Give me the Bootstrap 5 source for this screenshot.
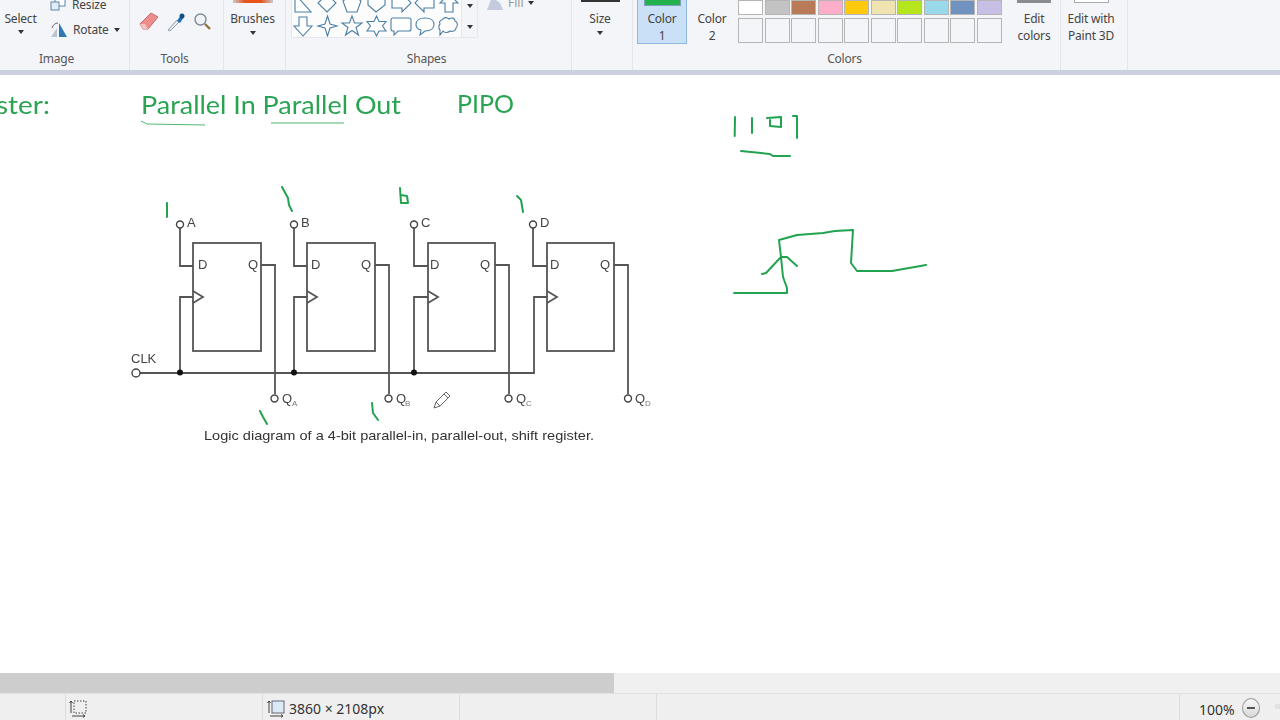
<!DOCTYPE html>
<html lang="en">
<head>
<meta charset="UTF-8">
<title>Paint</title>
<link href="https://cdn.jsdelivr.net/npm/bootstrap@5.3.3/dist/css/bootstrap.min.css" rel="stylesheet">
<style>
    html, body { height: 100%; overflow: hidden; }
    body { background: #fff; font-family: "Noto Sans", "Open Sans", sans-serif; color: #444; }
    .paint-app { width: 1280px; height: 720px; }

    /* ribbon */
    .ribbon { height: 75px; background: #f4f5f8; border-bottom: 5px solid #ccd1e1; overflow: hidden; flex: none; }
    .rb-group { height: 70px; border-right: 1px solid #e4e6ec; flex: none; }
    .rb-body { height: 50px; overflow: hidden; }
    .rb-label { height: 20px; line-height: 17px; font-size: 12px; letter-spacing: -.2px; color: #555; text-align: center; padding-right: 4px; }
    .w-image { width: 130px; } .w-tools { width: 94px; } .w-brush { width: 62px; } .w-shapes { width: 286px; }
    .w-size { width: 61px; } .w-colors { width: 428px; } .w-3d { width: 67px; }
    .w-image .rb-label { padding-right: 16px; }
    .rb-txt { font-size: 12px; line-height: 17px; letter-spacing: -.2px; color: #444; text-align: center; }
    .rb-caret { width: 0; height: 0; border: 3px solid transparent; border-top: 4px solid #333; border-bottom: 0; display: inline-block; }
    .rb-tall { padding-top: 10px; }
    .rb-tall .rb-caret { margin-top: 3px; }
    .sel-col { width: 41px; }
    .img-col { padding-left: 9px; width: 88px; }
    .img-row { height: 25px; gap: 5px; }
    .img-row.first { margin-top: -8px; }
    .tool-row { padding: 12px 0 0 9px; gap: 7px; }
    .w-brush .rb-body, .w-size .rb-body { padding-right: 4px; }
    .brush-top { width: 40px; height: 3px; margin: 0 auto 7px; background: linear-gradient(90deg, #c9c9c9, #e8541c 30%, #e8541c 70%, #c9c9c9); }
    .shape-panel { width: 171px; height: 38px; margin-left: 5px; background: #fcfcfd; border: 1px solid #e6e8ee; border-top: 0; }
    .shape-scroll { width: 16px; height: 38px; border: 1px solid #e6e8ee; border-left: 0; border-top: 0; }
    .fill-col { margin-left: 8px; font-size: 12px; color: #999; gap: 4px; margin-top: -6px; height: 18px; }
    .size-line { width: 39px; height: 2px; background: #333; margin: 0 auto 8px; }
    .color-one { width: 50px; height: 44px; margin-left: 4px; background: #c9e0f7; border: 1px solid #8fb7e0; border-top: 0; }
    .color-two { width: 50px; height: 44px; }
    .sw-big { width: 35px; height: 5px; margin: 0 auto 5px; background: #22b14c; outline: 1px solid #7d9fb8; }
    .sw-none { height: 5px; margin-bottom: 5px; }
    .palette { margin-left: 1px; width: 270px; display: grid; grid-template-columns: repeat(10, 25px); gap: 3px 1.5px; grid-template-rows: 15px 25px; }
    .sw { border: 1px solid #b5b5b5; background: #f4f5f8; box-sizing: border-box; }
    .edit-col { width: 50px; margin-left: 1px; }
    .edit-top { width: 34px; height: 3px; margin: 0 auto 7px; background: #8a8a90; }
    .w-3d .rb-body { padding-right: 6px; }
    .p3d-top { width: 35px; height: 3px; margin: 0 auto 7px; background: #fff; border: 1px solid #aaa; border-top: 0; }

    /* drawing surface */
    .draw-area { flex: 1 1 auto; background: #fff; min-height: 0; }
    .draw-area svg { display: block; filter: blur(.4px); }
    .wire { fill: none; stroke: #555; stroke-width: 1.8; }
    .pin { fill: #fff; stroke: #444; stroke-width: 1.4; }
    .dot { fill: #111; }
    .ink { fill: none; stroke: #22a34f; stroke-width: 2; stroke-linejoin: round; stroke-linecap: round; }
    .ink-thin { fill: none; stroke: #4fb574; stroke-width: 1; }
    .hand-title { font-family: Lato, sans-serif; font-size: 25px; fill: #2aa352; }
    .lbl { font-family: "Liberation Sans", Arial, sans-serif; font-size: 13px; fill: #444; }
    .lbl-sub { font-family: "Liberation Sans", Arial, sans-serif; font-size: 8px; fill: #777; }
    .caption { font-family: "Liberation Sans", Arial, sans-serif; font-size: 13.5px; fill: #333; }

    /* scrollbar + status */
    .h-scroll { height: 20px; background: #f0f0f0; flex: none; }
    .h-thumb { width: 614px; height: 100%; background: #cdcdcd; }
    .status-bar { height: 27px; background: #efefef; border-top: 1px solid #e2e2e2; flex: none; font-size: 14px; color: #333; }
    .st-cell { height: 100%; border-right: 1px solid #dcdcdc; flex: none; padding-top: 3px; }
    .st-a { width: 66px; } .st-b { width: 197px; padding-left: 3px; } .st-c { width: 197px; padding-left: 4px; gap: 3px; }
    .st-d { width: 197px; } .st-e { width: 523px; }
    .st-zoom { padding: 3px 0 0 19px; gap: 7px; }
    .st-zoom > span { padding-top: 2px; }
    .zoom-btn { width: 18px; height: 20px; border-radius: 50%; border: 1px solid #999; background: linear-gradient(#f8f8f8, #d8d8d8); margin-top: -2px; }
    .zoom-btn span { width: 8px; height: 2px; background: #555; display: block; }
    .zoom-tick { width: 5px; height: 5px; background: #e2e2e2; margin-left: 8px; margin-top: -4px; }
</style>
</head>
<body>
<div class="paint-app d-flex flex-column">

    <!-- ribbon -->
    <div class="ribbon d-flex">
        <div class="rb-group w-image">
            <div class="rb-body d-flex">
                <div class="sel-col rb-tall rb-txt d-flex flex-column align-items-center">
                    <div>Select</div>
                    <span class="rb-caret"></span>
                </div>
                <div class="img-col">
                    <div class="img-row first d-flex align-items-center">
                        <svg width="17" height="17" viewBox="0 0 17 17"><rect x="5" y="1" width="10" height="9" fill="#fff" stroke="#5a86ad"/><rect x="1" y="6" width="8" height="8" fill="#e4edf5" stroke="#5a86ad"/></svg>
                        <span class="rb-txt">Resize</span>
                    </div>
                    <div class="img-row d-flex align-items-center">
                        <svg width="18" height="17" viewBox="0 0 18 17"><path d="M9 2 17 16H9z" fill="#2f78b7"/><path d="M1 16 7 7v9z" fill="#b9c6d2"/><path d="M2 7C3 4 5 2 8 2" fill="none" stroke="#667"/></svg>
                        <span class="rb-txt">Rotate</span>
                        <span class="rb-caret"></span>
                    </div>
                </div>
            </div>
            <div class="rb-label">Image</div>
        </div>

        <div class="rb-group w-tools">
            <div class="rb-body">
                <div class="tool-row d-flex">
                    <svg width="20" height="18" viewBox="0 0 20 18"><path d="M1 12 12 1l7 4-10 12H4z" fill="#ef8d8d" stroke="#c96a6a"/><path d="M1 12l3 5h5l-3-5z" fill="#f4c4c0"/></svg>
                    <svg width="20" height="20" viewBox="0 0 20 20"><path d="M2 18 11 8l2 2-9 9z" fill="#e8eef3" stroke="#8a9aa8"/><path d="M11 9l4-6 3 2-4 6z" fill="#1f6fb5"/><circle cx="16" cy="4" r="2.5" fill="#14507f"/></svg>
                    <svg width="19" height="19" viewBox="0 0 19 19"><circle cx="7.5" cy="7.5" r="5.5" fill="#eef3f8" stroke="#7e8b96" stroke-width="1.4"/><path d="M12 12l5 5" stroke="#94703f" stroke-width="2.4"/></svg>
                </div>
            </div>
            <div class="rb-label">Tools</div>
        </div>

        <div class="rb-group w-brush">
            <div class="rb-body rb-txt d-flex flex-column align-items-center">
                <div class="brush-top"></div>
                <div>Brushes</div>
                <span class="rb-caret mt-1"></span>
            </div>
            <div class="rb-label"></div>
        </div>

        <div class="rb-group w-shapes">
            <div class="rb-body d-flex">
                <div class="shape-panel">
                    <svg width="169" height="37" viewBox="1 0 169 37" fill="#fff" stroke="#4a7fa5" stroke-width="1.1">
                        <path d="M4 -6 20 12H4z"/>
                        <path d="M36 -6 45 3 36 12 27 3z"/>
                        <path d="M61 -6 70 1 66 12H56L52 1z"/>
                        <path d="M77 -6H94V5L85 12 77 5z"/>
                        <path d="M101 -3H111V-7L120 3 111 12V8H101z"/>
                        <path d="M143 -3H133V-7L124 3 133 12V8H143z"/>
                        <path d="M158 -6 167 3H162V12H154V3H149z"/>
                        <path d="M8 17H16V26H21L12 36 3 26H8z"/>
                        <path d="M36.5 16 39 24 46 26 39 28 36.5 36 34 28 27 26 34 24z"/>
                        <path d="M61 16 63.5 23 71 23 65 27.5 67.5 35 61 30.5 54.5 35 57 27.5 51 23 58.5 23z"/>
                        <path d="M85.5 16 88 21.5 95 21.5 91.500 26 95 31 88 31 85.500 36 83 31 76 31 79.500 26 76 21.500 83 21.500z"/>
                        <path d="M102 18H118Q120 18 120 20V29Q120 31 118 31H107L103 35V31H102Q100 31 100 29V20Q100 18 102 18z"/>
                        <path d="M134 18C140 18 143 21 143 24.500 143 28 140 31 134 31L129 35 130 30C126 29 125 27 125 24.500 125 21 128 18 134 18z"/>
                        <path d="M151 20C153 17 156 17 158 19 161 17 164 18 164 21 167 22 167 26 165 28 165 31 161 32 159 31 157 33 153 33 152 31L149 35 149 30C147 28 148 25 149 24 148 22 149 20 151 20z"/>
                    </svg>
                </div>
                <div class="shape-scroll d-flex flex-column align-items-center">
                    <span class="rb-caret mt-1"></span>
                    <span class="rb-caret mt-auto mb-2"></span>
                </div>
                <div class="fill-col d-flex align-items-center">
                    <svg width="18" height="16" viewBox="0 0 18 16"><path d="M1 15 6 2l8 6 3 7z" fill="#c4cbdc"/></svg>
                    <span>Fill</span>
                    <span class="rb-caret"></span>
                </div>
            </div>
            <div class="rb-label">Shapes</div>
        </div>

        <div class="rb-group w-size">
            <div class="rb-body rb-txt d-flex flex-column align-items-center">
                <div class="size-line"></div>
                <div>Size</div>
                <span class="rb-caret mt-1"></span>
            </div>
            <div class="rb-label"></div>
        </div>

        <div class="rb-group w-colors">
            <div class="rb-body d-flex">
                <div class="color-one rb-txt"><div class="sw-big"></div>Color<br>1</div>
                <div class="color-two rb-txt"><div class="sw-none"></div>Color<br>2</div>
                <div class="palette">
                    <div class="sw" style="background:#ffffff"></div>
                    <div class="sw" style="background:#c3c3c3"></div>
                    <div class="sw" style="background:#b97a57"></div>
                    <div class="sw" style="background:#ffaec9"></div>
                    <div class="sw" style="background:#ffc90e"></div>
                    <div class="sw" style="background:#efe4b0"></div>
                    <div class="sw" style="background:#b5e61d"></div>
                    <div class="sw" style="background:#99d9ea"></div>
                    <div class="sw" style="background:#7092be"></div>
                    <div class="sw" style="background:#c8bfe7"></div>
                    <div class="sw"></div><div class="sw"></div><div class="sw"></div><div class="sw"></div><div class="sw"></div>
                    <div class="sw"></div><div class="sw"></div><div class="sw"></div><div class="sw"></div><div class="sw"></div>
                </div>
                <div class="edit-col rb-txt"><div class="edit-top"></div>Edit<br>colors</div>
            </div>
            <div class="rb-label">Colors</div>
        </div>

        <div class="rb-group w-3d">
            <div class="rb-body rb-txt"><div class="p3d-top"></div>Edit with<br>Paint 3D</div>
            <div class="rb-label"></div>
        </div>
    </div>

    <!-- canvas: the sketch is free-placed, so one svg in page coordinates -->
    <div class="draw-area">
        <svg width="1280" height="598" viewBox="0 75 1280 598">
            <!-- handwritten titles -->
            <text class="hand-title" x="-4" y="114" textLength="54" lengthAdjust="spacingAndGlyphs">ster:</text>
            <text class="hand-title" x="141" y="114" textLength="260" lengthAdjust="spacingAndGlyphs">Parallel In Parallel Out</text>
            <text class="hand-title" x="457" y="113" textLength="57" lengthAdjust="spacingAndGlyphs">PIPO</text>
            <path class="ink-thin" d="M141 121 147 124 205 125M271 123H344"/>

            <!-- flip-flops -->
            <g class="wire">
                <rect x="193" y="243" width="68" height="108"/>
                <rect x="307" y="243" width="68" height="108"/>
                <rect x="428" y="243" width="67" height="108"/>
                <rect x="547" y="243" width="67" height="108"/>
                <path d="M180 228V266H193M180 373V297H193M193 291 203 297 193 303M261 265H275V394"/>
                <path d="M294 228V266H307M294 373V297H307M307 291 317 297 307 303M375 265H389V394"/>
                <path d="M414 228V266H428M414 373V297H428M428 291 438 297 428 303M495 265H509V394"/>
                <path d="M533 228V266H547M547 297H534V373H140M547 291 557 297 547 303M614 265H628V394"/>
            </g>
            <circle class="pin" cx="180" cy="224.500" r="3.500"/>
            <circle class="pin" cx="294" cy="224.500" r="3.500"/>
            <circle class="pin" cx="414" cy="224.500" r="3.500"/>
            <circle class="pin" cx="533" cy="224.500" r="3.500"/>
            <circle class="pin" cx="136" cy="373" r="4"/>
            <circle class="pin" cx="274.500" cy="398.500" r="3.500"/>
            <circle class="pin" cx="388.500" cy="398.500" r="3.500"/>
            <circle class="pin" cx="508.500" cy="398.500" r="3.500"/>
            <circle class="pin" cx="628" cy="398.500" r="3.500"/>
            <circle class="dot" cx="180" cy="372.500" r="3"/>
            <circle class="dot" cx="294" cy="372.500" r="3"/>
            <circle class="dot" cx="414" cy="372.500" r="3"/>

            <g class="lbl">
                <text x="187" y="227">A</text><text x="301" y="227">B</text><text x="421" y="227">C</text><text x="540" y="227">D</text>
                <text x="198" y="269">D</text><text x="248" y="269">Q</text>
                <text x="311" y="269">D</text><text x="361" y="269">Q</text>
                <text x="430" y="269">D</text><text x="480" y="269">Q</text>
                <text x="550" y="269">D</text><text x="600" y="269">Q</text>
                <text x="131" y="363">CLK</text>
                <text x="282" y="403">Q</text><text x="396" y="403">Q</text><text x="516" y="403">Q</text><text x="635" y="403">Q</text>
            </g>
            <g class="lbl-sub">
                <text x="292" y="406">A</text><text x="405" y="406">B</text><text x="526" y="406">C</text><text x="645" y="406">D</text>
            </g>
            <text class="caption" x="204" y="440" textLength="390" lengthAdjust="spacingAndGlyphs">Logic diagram of a 4-bit parallel-in, parallel-out, shift register.</text>

            <!-- pencil cursor -->
            <path d="M434 408 436 402 446 392 450 396 440 406zM436 402 440 406M444 394 448 398" fill="#fff" stroke="#555" stroke-width=".9"/>

            <!-- ink marks over the diagram -->
            <g class="ink">
                <path d="M167 203V217"/>
                <path d="M282 187 288 198 289 205 292 211"/>
                <path d="M400 188 401 203H408L407 196 401 195"/>
                <path d="M517 196 521 200 523 212"/>
                <path d="M260 411 263 417 267 424"/>
                <path d="M372 403 373 413 378 420"/>
                <path d="M735 117 734.700 136"/>
                <path d="M752 118V133"/>
                <path d="M767 118 781 117V127L770 126V120"/>
                <path d="M793 116H797V138"/>
                <path d="M741 151 770 154 773 156H790"/>
                <path d="M734 293H787V288L783 277 781 257 779 240 797 235 823 233 835 231 853 230 851 263 857 271H892L926 265"/>
                <path d="M762 274 766 273 781 257 787 257 797 266"/>
            </g>
        </svg>
    </div>

    <!-- horizontal scrollbar -->
    <div class="h-scroll"><div class="h-thumb"></div></div>

    <!-- status bar -->
    <div class="status-bar d-flex align-items-center">
        <div class="st-cell st-a"></div>
        <div class="st-cell st-b d-flex align-items-center">
            <svg width="19" height="19" viewBox="0 0 19 19" fill="none" stroke="#444"><path d="M2 14V2M.5 4 2 2 3.500 4M3 17H16M14 15.500 16 17 14 18.500"/><rect x="5" y="2" width="12" height="12" stroke-dasharray="1.500 1.500"/></svg>
        </div>
        <div class="st-cell st-c d-flex align-items-center">
            <svg width="19" height="19" viewBox="0 0 19 19" fill="none" stroke="#444"><path d="M2 14V2M.5 4 2 2 3.500 4M3 17H16M14 15.500 16 17 14 18.500"/><rect x="5" y="2" width="12" height="12" fill="#dceaf6" stroke="#667"/></svg>
            <span>3860 × 2108px</span>
        </div>
        <div class="st-cell st-d"></div>
        <div class="st-cell st-e"></div>
        <div class="st-zoom d-flex align-items-center">
            <span>100%</span>
            <div class="zoom-btn d-flex align-items-center justify-content-center"><span></span></div>
            <div class="zoom-tick"></div>
        </div>
    </div>
</div>
<script src="https://cdn.jsdelivr.net/npm/bootstrap@5.3.3/dist/js/bootstrap.bundle.min.js"></script>
</body>
</html>
